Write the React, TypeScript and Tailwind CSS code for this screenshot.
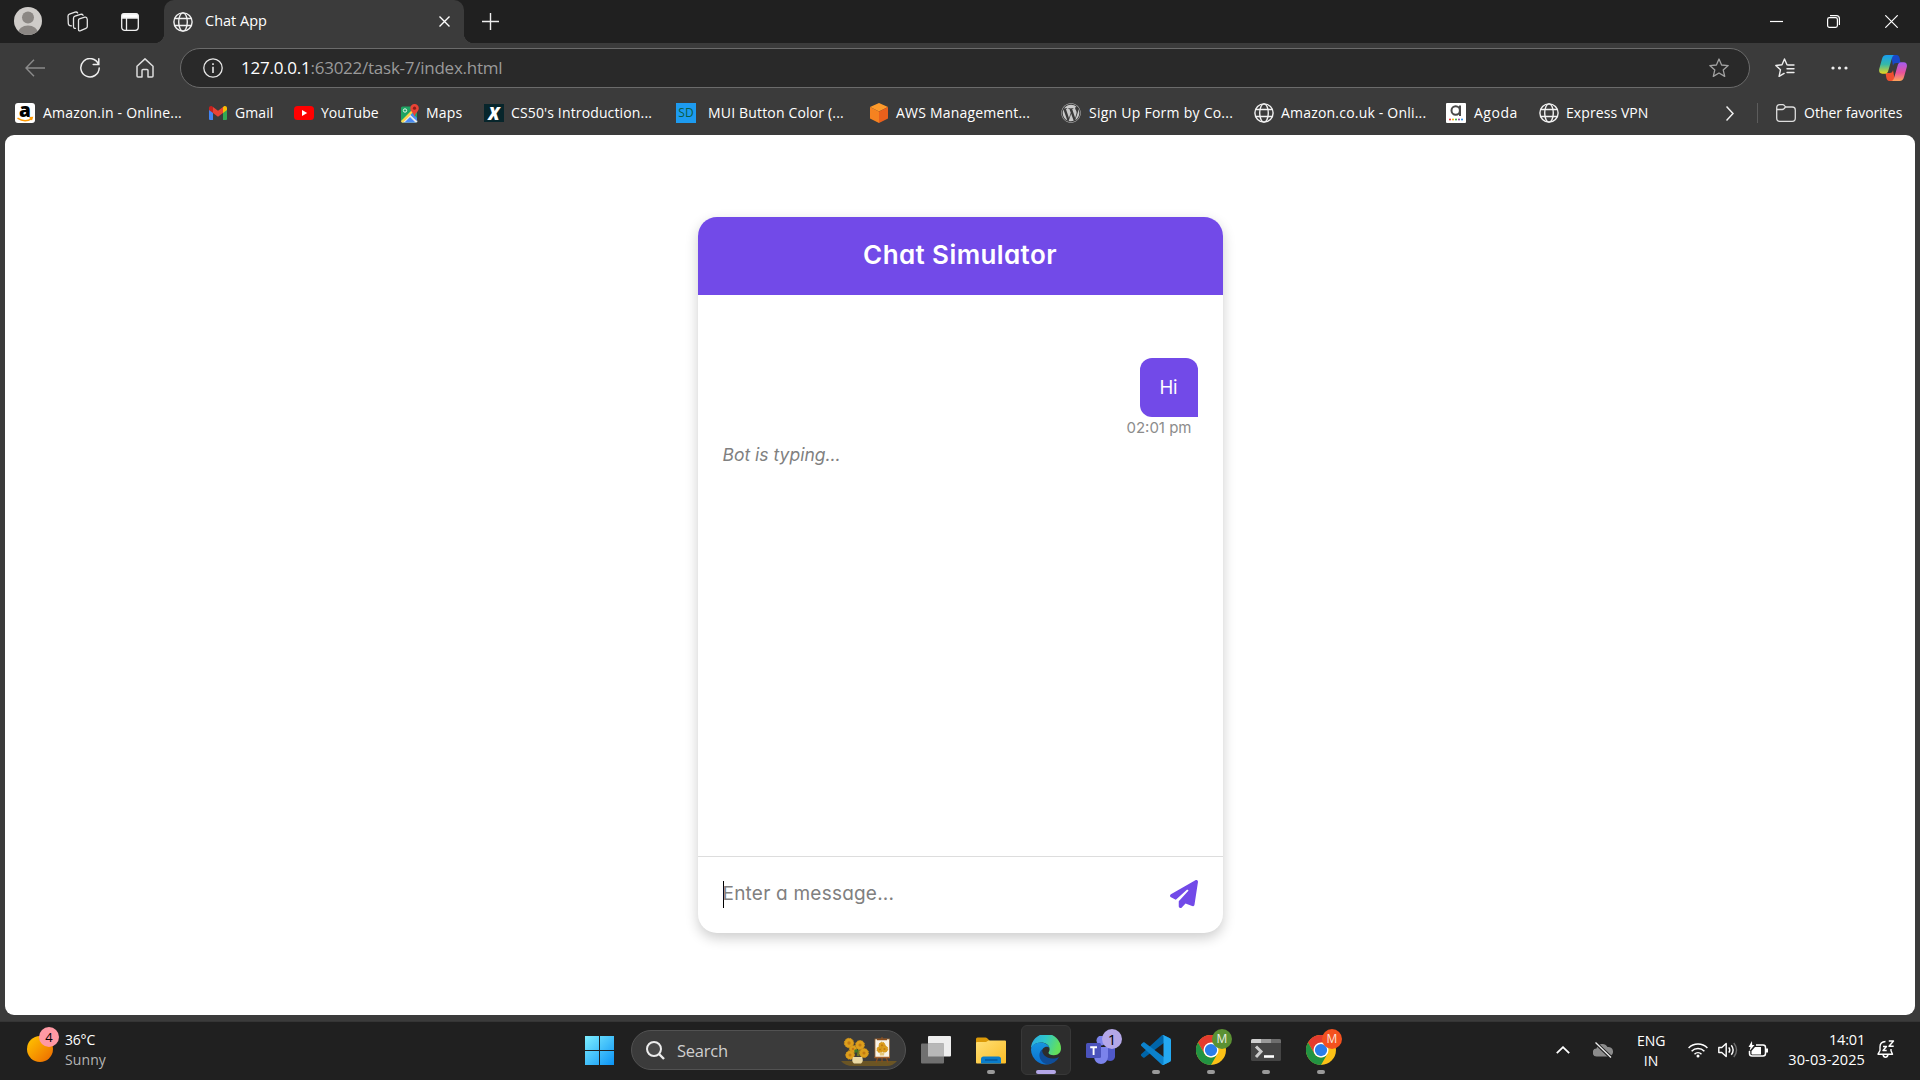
import { useState } from 'react';
import type { ReactNode } from 'react';
import { FaWordpress } from 'react-icons/fa6';

const Globe = ({ className = '' }: { className?: string }) => (
  <svg viewBox="0 0 20 20" className={`size-5 shrink-0 ${className}`} fill="none" stroke="#f1f1f1" strokeWidth="1.4">
    <circle cx="10" cy="10" r="9.1" />
    <ellipse cx="10" cy="10" rx="4.3" ry="9.1" />
    <path d="M1.8 6.5h16.4M1.8 13.5h16.4" />
  </svg>
);

const Chrome = () => (
  <svg viewBox="0 0 48 48" className="size-[30px]">
    <circle cx="24" cy="24" r="24" fill="#fbc116" />
    <path d="M24 12h20.8A24 24 0 0 0 3.2 12l10.4 18Z" fill="#e33b2e" />
    <path d="M3.2 12A24 24 0 0 0 24 48l10.4-18A12 12 0 0 1 13.6 30Z" fill="#229342" />
    <circle cx="24" cy="24" r="12" fill="#fff" />
    <circle cx="24" cy="24" r="9.8" fill="#2b7de9" />
  </svg>
);

const PaperPlane = () => (
  <svg viewBox="0 0 512 512" className="mb-px size-7" fill="#724ae8">
    <path d="M498.1 5.6c10.1 7 15.4 19.1 13.5 31.2l-64 416c-1.5 9.7-7.4 18.2-16 23s-18.9 5.400-28 1.600L284 427.700l-68.500 74.100c-8.900 9.700-22.900 12.900-35.200 8.100S160 493.200 160 480V396.400c0-4 1.500-7.800 4.200-10.700L331.800 202.800c5.800-6.300 5.600-16-.4-22s-15.700-6.400-22-.7L106 360.800 17.700 316.600C7.100 311.300 .3 300.700 0 288.900s5.900-22.800 16.100-28.700l448-256c10.700-6.100 23.900-5.500 34 1.400z" />
  </svg>
);

const AmazonIcon = () => (
  <div className="relative size-5 shrink-0 rounded-[3px] bg-white text-center font-['Open_Sans'] text-[19px] leading-[14px] font-extrabold text-black">
    a
    <svg viewBox="0 0 20 20" className="absolute inset-0 size-5" fill="none" stroke="#ff9900" strokeWidth="1.4">
      <path d="M2.5 15.2c4.500 3 10 3 14 .6M14.500 14.800l2.800-.2-.8 2.500" />
    </svg>
  </div>
);

const GmailIcon = () => (
  <svg viewBox="0 0 18 14" className="h-[14px] w-[18px] shrink-0">
    <path d="M0 2v11q0 1 1 1h3V5.500z" fill="#4285f4" />
    <path d="M18 2v11q0 1-1 1h-3V5.500z" fill="#34a853" />
    <path d="M4 1v6l5 3.800L14 7V1L9 4.800z" fill="#ea4335" />
    <path d="M0 2.200V4l4 3V1L3.300.5C1.800-.6 0 .4 0 2.200z" fill="#c5221f" />
    <path d="M18 2.200V4l-4 3V1l.7-.5C16.200-.6 18 .4 18 2.200z" fill="#fbbc04" />
  </svg>
);

const YouTubeIcon = () => (
  <svg viewBox="0 0 20 14" className="h-[14px] w-5 shrink-0">
    <rect width="20" height="14" rx="3.500" fill="#f00" />
    <path d="M8 4v6l5.200-3z" fill="#fff" />
  </svg>
);

const MapsIcon = () => (
  <svg viewBox="0 0 18 19" className="h-[19px] w-[18px] shrink-0">
    <rect x="0" y="2.500" width="16" height="16" rx="1.500" fill="#1fa463" />
    <path d="M1 18.500 9 10l7.500 7q0 1.500-1.500 1.500z" fill="#e8eaed" />
    <path d="M0 17 11 6l1.800 1.800L2 18.500q-2 0-2-1.500z" fill="#fbd34b" />
    <path d="M3.500 18.500 9 13l5.500 5.500z" fill="#4a8af4" />
    <path d="m9.500 11 2-2 4.500 5v3z" fill="#4a8af4" />
    <circle cx="4" cy="6.500" r="1.700" fill="none" stroke="#e7f5ec" />
    <path d="M13.500 0A4.200 4.200 0 0 0 9.300 4.200c0 3 3.500 4.500 4.200 8.800.7-4.300 4.300-5.800 4.300-8.800A4.200 4.200 0 0 0 13.500 0z" fill="#ea4335" />
    <circle cx="13.500" cy="4.200" r="1.600" fill="#8c1d18" />
  </svg>
);

const XIcon = () => (
  <div className="flex h-[18px] w-5 shrink-0 items-center justify-center bg-[#07252b] font-['Open_Sans'] text-[17px] leading-none font-extrabold text-white italic">X</div>
);

const SdIcon = () => (
  <div className="flex size-5 shrink-0 items-center justify-center bg-[#1d9bf0] font-['Open_Sans'] text-[12px] leading-none font-medium text-[#0a5c46]">SD</div>
);

const AwsIcon = () => (
  <svg viewBox="0 0 18 20" className="h-5 w-[18px] shrink-0">
    <path d="M9 0l9 4-9 4.500L0 4z" fill="#fd9a2b" />
    <path d="M0 4l9 4.500V20l-9-4.500z" fill="#f58220" />
    <path d="M18 4 9 8.500V20l9-4.500z" fill="#e9601c" />
  </svg>
);

const AgodaIcon = () => (
  <svg viewBox="0 0 20 20" className="size-5 shrink-0">
    <rect width="20" height="20" rx="1" fill="#fff" />
    <circle cx="9.700" cy="7.500" r="4.200" fill="none" stroke="#4a4a4a" strokeWidth="2" />
    <path d="M14 2.500v10.500" stroke="#4a4a4a" strokeWidth="2" />
    <circle cx="4" cy="16.500" r="1" fill="#e8262a" />
    <circle cx="7" cy="16.500" r="1" fill="#f7a600" />
    <circle cx="10" cy="16.500" r="1" fill="#3aaa35" />
    <circle cx="13" cy="16.500" r="1" fill="#8a3f98" />
    <circle cx="16" cy="16.500" r="1" fill="#1e88e5" />
  </svg>
);

const Copilot = () => (
  <svg viewBox="0 0 28 26" className="h-[26px] w-7">
    <defs>
      <linearGradient id="cpA" x1="0" y1="0" x2="0" y2="1">
        <stop offset="0" stopColor="#189df0" />
        <stop offset=".5" stopColor="#35b8a8" />
        <stop offset="1" stopColor="#e8d51d" />
      </linearGradient>
      <linearGradient id="cpB" x1="0" y1="0" x2="0" y2="1">
        <stop offset="0" stopColor="#a35cf0" />
        <stop offset=".55" stopColor="#e8529b" />
        <stop offset="1" stopColor="#fda45a" />
      </linearGradient>
    </defs>
    <path d="M12 0h5.500c2 0 2.700 1.500 3.200 3.500L21.500 8h-4c-2.500 0-3 1-3.500 3z" fill="#1848c9" />
    <path d="M16 26h-5.500c-2 0-2.700-1.500-3.200-3.500L6.500 18h4c2.500 0 3-1 3.500-3z" fill="#ef4f2f" />
    <path d="M7.500 0H16c-2 0-2.800 2-3.500 4.500L9.500 15c-.7 2.500-1.500 3.700-3.500 3.700H3.200C.5 18.700-.3 16.500.2 14L3 4C3.700 1.500 5 0 7.500 0z" fill="url(#cpA)" />
    <path d="M20.500 26H12c2 0 2.800-2 3.500-4.500L18.500 11c.7-2.500 1.500-3.700 3.500-3.700h2.800c2.700 0 3.500 2.200 3 4.700L25 22c-.7 2.500-2 4-4.500 4z" fill="url(#cpB)" />
  </svg>
);

const bookmarks: { icon: ReactNode; label: string; slot: string; text: string }[] = [
  { icon: <AmazonIcon />, label: 'Amazon.in - Online...', slot: 'w-[194px] gap-2', text: 'tracking-[0.2px]' },
  { icon: <GmailIcon />, label: 'Gmail', slot: 'w-[85px] gap-2', text: 'tracking-[0.1px]' },
  { icon: <YouTubeIcon />, label: 'YouTube', slot: 'w-[107px] gap-[7px]', text: '' },
  { icon: <MapsIcon />, label: 'Maps', slot: 'w-[83px] gap-[7px]', text: 'tracking-[0.2px]' },
  { icon: <XIcon />, label: "CS50's Introduction...", slot: 'w-[192px] gap-[7px]', text: 'tracking-[0.14px]' },
  { icon: <SdIcon />, label: 'MUI Button Color (...', slot: 'w-[194px] gap-3', text: 'tracking-[0.17px]' },
  { icon: <AwsIcon />, label: 'AWS Management...', slot: 'w-[191px] gap-2', text: 'tracking-[0.2px]' },
  { icon: <FaWordpress className="size-5 shrink-0 text-[#c9c9c9]" />, label: 'Sign Up Form by Co...', slot: 'w-[193px] gap-2', text: 'tracking-[0.25px]' },
  { icon: <Globe />, label: 'Amazon.co.uk - Onli...', slot: 'w-[192px] gap-[7px]', text: 'tracking-[0.2px]' },
  { icon: <AgodaIcon />, label: 'Agoda', slot: 'w-[93px] gap-2', text: 'tracking-[0.5px]' },
  { icon: <Globe />, label: 'Express VPN', slot: 'w-[187px] gap-[7px]', text: 'tracking-[0.08px]' },
];

function TabStrip() {
  return (
    <div className="flex h-[43px] items-center bg-[#202020]">
      <svg viewBox="0 0 28 28" className="-mt-px ml-[14px] size-7">
        <defs><clipPath id="av"><circle cx="14" cy="14" r="14" /></clipPath></defs>
        <g clipPath="url(#av)">
          <rect width="28" height="28" fill="#cfccc9" />
          <circle cx="14" cy="10.500" r="6" fill="#8b8784" />
          <ellipse cx="14" cy="26" rx="10" ry="7.500" fill="#8b8784" />
        </g>
      </svg>
      <svg viewBox="0 0 21 21" className="ml-[25px] size-[21px]" fill="none" stroke="#e6e6e6" strokeWidth="1.300" strokeLinejoin="round" strokeLinecap="round">
        <path d="m12.300 7.800 5.500-1.600q1.800-.4 2.200 1.200.3.900.3 1.600v6.500q0 1.400-1.400 1.900l-5.300 2.300q-2.100.8-2.100-1.300V9.300q0-1.200.8-1.500z" />
        <path d="M8.500 17.300q-2 .2-2-1.700V7.200q0-1.500 1.500-2l5.500-1.800q1.800-.5 2.600.9" />
        <path d="M4.500 14.800q-3 .2-3.200-2.300L1 5.200q0-1.500 1.400-2L8 1.200q1.800-.6 2.600.7" />
      </svg>
      <svg viewBox="0 0 18 18" className="ml-[33px] size-[18px]" fill="none" stroke="#f0f0f0" strokeWidth="1.300">
        <rect x=".7" y=".7" width="16.600" height="16.600" rx="3" />
        <path d="M1 1.500Q1 1 3 1h12q2 0 2 1.500V5H1z" fill="#fff" />
        <path d="M5.500 5v12" />
      </svg>
      <div className="relative ml-[25px] flex h-[43px] w-[300px] items-center rounded-t-[10px] bg-[#3b3b3b] before:absolute before:bottom-0 before:-left-[10px] before:size-[10px] before:bg-[radial-gradient(circle_at_0_0,#202020_10px,#3b3b3b_10.500px)] after:absolute after:-right-[10px] after:bottom-0 after:size-[10px] after:bg-[radial-gradient(circle_at_100%_0,#202020_10px,#3b3b3b_10.500px)]">
        <Globe className="ml-[9px]" />
        <span className="ml-3 pb-px text-[14.500px] leading-5">Chat App</span>
        <svg viewBox="0 0 11 11" className="mr-[14px] ml-auto size-[11px]" stroke="#fff" strokeWidth="1.400"><path d="M.5.5l10 10M10.500.5l-10 10" /></svg>
      </div>
      <svg viewBox="0 0 17 17" className="-mt-px ml-[18px] size-[17px]" stroke="#eee" strokeWidth="1.400"><path d="M8.500 0v17M0 8.500h17" /></svg>
      <svg viewBox="0 0 13 13" className="ml-auto size-[13px]" stroke="#fff" strokeWidth="1.200"><path d="M0 6.500h13" /></svg>
      <svg viewBox="0 0 13 13" className="ml-11 size-[13px]" fill="none" stroke="#fff" strokeWidth="1.200">
        <rect x=".6" y="2.600" width="9.800" height="9.800" rx="1.800" />
        <path d="M3 .6h6.400q3 0 3 3V10" />
      </svg>
      <svg viewBox="0 0 13 13" className="mr-[22px] ml-[45px] size-[13px]" stroke="#fff" strokeWidth="1.200"><path d="M.3.3l12.400 12.400M12.700.3.3 12.700" /></svg>
    </div>
  );
}

function AddressRow() {
  return (
    <div className="flex h-[50px] items-center">
      <svg viewBox="0 0 20 18" className="-mt-px ml-[25px] h-[18px] w-5" fill="none" stroke="#8b8b8b" strokeWidth="1.400"><path d="M20 9H1M9 .8 1 9l8 8.200" /></svg>
      <svg viewBox="0 0 20 20" className="ml-[35px] size-5" fill="none" stroke="#eee" strokeWidth="1.500" strokeLinecap="round"><path d="M18.500 6.200A9.200 9.200 0 1 0 19.200 10M18.800.8v5.700h-5.600" /></svg>
      <svg viewBox="0 0 18 20" className="ml-9 h-5 w-[18px]" fill="none" stroke="#ddd" strokeWidth="1.500" strokeLinejoin="round"><path d="M9 .9 1 8.200V18q0 1 1 1h4v-6.500q0-1 1-1h4q1 0 1 1V19h4q1 0 1-1V8.200z" /></svg>
      <div className="ml-[26px] flex h-10 w-[1570px] items-center rounded-full border border-[#6b6b6b] bg-[#292929]">
        <svg viewBox="0 0 20 20" className="ml-[22px] size-5" fill="none" stroke="#e6e6e6" strokeWidth="1.300"><circle cx="10" cy="10" r="9.200" /><path d="M10 8.800V15M10 5.200v1.800" strokeWidth="1.600" /></svg>
        <span className="ml-[18px] text-[17px] leading-6 tracking-[-0.25px] text-[#9a9a9a]"><span className="text-white">127.0.0.1</span>:63022/task-7/index.html</span>
        <svg viewBox="0 0 20 20" className="mr-5 ml-auto size-5" fill="none" stroke="#a2a2a2" strokeWidth="1.300" strokeLinejoin="round"><path d="m10 1 2.600 6 6.600.6-5 4.300 1.500 6.500L10 15l-5.700 3.400 1.500-6.500-5-4.300L7.400 7z" /></svg>
      </div>
      <svg viewBox="0 0 20 20" className="ml-[25px] size-5" fill="none" stroke="#eee" strokeWidth="1.400" strokeLinejoin="round" strokeLinecap="round"><path d="M13.500 7 12 6.800 9.500 1 7 6.800.8 7.500l4.700 4.200-1.400 6.700 5-3M13.500 7H19M12 10.800h7M12 14.500h7" /></svg>
      <svg viewBox="0 0 17 4" className="ml-9 h-1 w-[17px]" fill="#eee"><circle cx="2" cy="2" r="1.600" /><circle cx="8.500" cy="2" r="1.600" /><circle cx="15" cy="2" r="1.600" /></svg>
      <div className="ml-[31px]"><Copilot /></div>
    </div>
  );
}

function BookmarkBar() {
  return (
    <div className="flex h-[42px] items-center pb-0.5 pl-[15px] text-[14px] leading-5 whitespace-nowrap text-white">
      {bookmarks.map((b) => (
        <div key={b.label} className={`flex shrink-0 items-center ${b.slot}`}>
          {b.icon}
          <span className={b.text}>{b.label}</span>
        </div>
      ))}
      <svg viewBox="0 0 8 15" className="h-[15px] w-2" fill="none" stroke="#eee" strokeWidth="1.500"><path d="m.5.5 6.500 7-6.500 7" /></svg>
      <div className="ml-[23px] h-5 w-px bg-[#5c5c5c]" />
      <svg viewBox="0 0 20 18" className="ml-[18px] h-[18px] w-5" fill="none" stroke="#ddd" strokeWidth="1.300"><path d="M.7 4q0-3.300 3-3.300h3q1 0 2 1.200l1 1.100h6.600q3 0 3 3V14q0 3.300-3 3.300H3.700q-3 0-3-3.300zM.7 5.500h5.500q1 0 2-1L9.500 3" /></svg>
      <span className="ml-2">Other favorites</span>
    </div>
  );
}

function ChatCard() {
  const [message, setMessage] = useState('');
  return (
    <div className="flex h-[716px] w-[525px] flex-col overflow-hidden rounded-[19px] bg-white font-['Inter',sans-serif] shadow-[0_5px_13px_rgba(0,0,0,0.2)] [font-feature-settings:'cv11']">
      <div className="flex h-[78px] shrink-0 justify-center bg-[#724ae8] pt-[19px] text-[26px] leading-[38px] font-semibold tracking-[0.4px] text-white">Chat Simulator</div>
      <div className="flex flex-1 flex-col px-[25px] pt-[63px]">
        <div className="flex h-[59px] w-[58px] items-center justify-center self-end rounded-[12px] rounded-br-none bg-[#724ae8] text-[18.500px] text-white">Hi</div>
        <div className="mr-[6px] self-end pt-px text-[15px] leading-5 text-[#8c8c8c]">02:01 pm</div>
        <div className="pt-[5px] text-[17.500px] leading-6 text-[#808080] italic">Bot is typing...</div>
      </div>
      <div className="flex h-[77px] shrink-0 items-center border-t border-[#dddddd] px-[25px] pb-px">
        <div className="h-[27px] w-px bg-black" />
        <input
          value={message}
          onChange={(e) => setMessage(e.target.value)}
          placeholder="Enter a message..."
          className="-ml-px flex-1 bg-transparent text-[19px] tracking-[0.22px] outline-none placeholder:text-[#808080]"
        />
        <PaperPlane />
      </div>
    </div>
  );
}

const Slot = ({ children, dot = true }: { children: ReactNode; dot?: boolean }) => (
  <div className="relative flex h-[50px] w-[50px] items-center justify-center">
    {children}
    {dot && <span className="absolute bottom-px left-[21px] h-1 w-2 rounded-full bg-[#9a9a9a]" />}
  </div>
);

const Badge = ({ children, className }: { children: ReactNode; className: string }) => (
  <span className={`absolute top-1 left-[26px] flex size-5 items-center justify-center rounded-full leading-none ${className}`}>{children}</span>
);

const Sunflower = ({ x, y, r }: { x: number; y: number; r: number }) => (
  <g>
    <circle cx={x} cy={y} r={r} fill="#dd9f1c" stroke="#d0931a" strokeWidth="1" strokeDasharray="1.500 1" />
    <circle cx={x} cy={y} r={r * 0.35} fill="#c27a14" />
  </g>
);

function Taskbar() {
  return (
    <div className="flex h-[59px] items-center border-t border-[#353535] bg-[#202020] pb-0.5">
      <div className="relative -mt-0.5 ml-[27px] size-[26px] rounded-full bg-linear-to-br from-[#ffc800] to-[#ea6500]">
        <span className="absolute -top-[9px] left-3 flex size-5 items-center justify-center rounded-full bg-[#ff99a4] text-[13px] leading-none text-black">4</span>
      </div>
      <div className="ml-3 w-[508px] text-[14px] leading-5">
        <div className="tracking-[-0.2px]">36°C</div>
        <div className="tracking-[0.1px] text-[#b5b5b5]">Sunny</div>
      </div>
      <svg viewBox="0 0 29 29" className="ml-3 size-[29px]">
        <defs><linearGradient id="win" x1="0" y1="0" x2="1" y2="1"><stop offset="0" stopColor="#7deeff" /><stop offset="1" stopColor="#0b93f5" /></linearGradient></defs>
        <path d="M0 0h14v14H0zM15 0h14v14H15zM0 15h14v14H0zM15 15h14v14H15z" fill="url(#win)" />
      </svg>
      <div className="ml-[17px] flex h-10 w-[275px] items-center rounded-full border border-[#525252] bg-[#3b3b3b]">
        <svg viewBox="0 0 19 19" className="ml-[14px] size-[19px]" fill="none" stroke="#ececec" strokeWidth="2"><circle cx="8" cy="8" r="7" fill="#4a4a4a" /><path d="m13 13 5 5" strokeWidth="2.400" /></svg>
        <span className="ml-3 pt-0.5 text-[16.500px] leading-6 tracking-[-0.25px] text-[#cfcfcf]">Search</span>
        <svg viewBox="0 0 56 30" className="mt-1 mr-2 ml-auto h-[30px] w-14">
          <path d="M0 24h56q-4 5-10 5H12Q4 29 0 24z" fill="#6b5524" />
          <path d="M13 18 8 8M17 19l2-11M20 19l4-3M12 20l-3-1" stroke="#6f7a22" strokeWidth="2.500" />
          <Sunflower x={8} y={6} r={4.700} />
          <Sunflower x={19} y={8} r={4.500} />
          <Sunflower x={12} y={12} r={3.600} />
          <Sunflower x={23} y={16} r={4.500} />
          <Sunflower x={9} y={18} r={4.300} />
          <circle cx="15" cy="14" r="1.800" fill="#3d7a2a" />
          <path d="M12 20h9q2 4-1 6.500h-7Q10 24 12 20z" fill="#ead9a4" />
          <path d="M37 20l-2 5.500M45 20l2 5.500M41 0v25" stroke="#8a4d1d" strokeWidth="1.300" />
          <rect x="34" y="2" width="14.500" height="18.500" fill="#f8f3e6" stroke="#9b6a3c" strokeWidth=".8" />
          <path d="M36 2.500h10" stroke="#8a4d1d" strokeWidth="1.500" />
          <Sunflower x={41} y={8.2} r={3} />
          <Sunflower x={39} y={12.5} r={3} />
          <Sunflower x={43.5} y={12} r={3.2} />
          <path d="M38.500 15.500h5l-.5 3h-4z" fill="#e5c77a" />
          <path d="M33.500 20.500H49" stroke="#a4602a" strokeWidth="1.500" />
        </svg>
      </div>
      <div className="ml-[5px] flex gap-[5px]">
        <Slot dot={false}>
          <svg viewBox="0 0 30 28" className="h-7 w-[30px]">
            <rect x="7" width="23" height="20.500" rx="1" fill="#eeeeee" />
            <rect y="7.500" width="23" height="20" rx="1" fill="#707070" />
            <path d="M7 7.500h16v13H7z" fill="#b8b8b8" />
          </svg>
        </Slot>
        <Slot>
          <svg viewBox="0 0 30 27" className="h-[27px] w-[30px]">
            <defs><linearGradient id="fold" x1="0" y1="0" x2="1" y2="1"><stop offset="0" stopColor="#ffdf75" /><stop offset="1" stopColor="#fbbd26" /></linearGradient></defs>
            <path d="M0 8V2Q0 .5 1.500.5h8q1 0 1.700.8L14 4v4z" fill="#dc9a08" />
            <path d="M0 6q0-1 1-1h9l2.500-1.500H29q1 0 1 1V25.500q0 1-1 1H1q-1 0-1-1z" fill="url(#fold)" />
            <path d="M5 26.500V22q0-2.500 2.500-2.500h15Q25 19.500 25 22v4.500z" fill="#0a7dcb" />
            <path d="M9 23h12.500" stroke="#064f8f" strokeWidth="1.200" />
          </svg>
        </Slot>
        <div className="relative flex size-[50px] items-center justify-center rounded-md border border-[#383838] bg-[#2d2d2d]">
          <svg viewBox="0 0 30 30" className="size-[30px]">
            <defs>
              <linearGradient id="eA" x1="0" y1="0" x2="1" y2=".3"><stop offset="0" stopColor="#2aa6e6" /><stop offset=".5" stopColor="#2fc7cb" /><stop offset="1" stopColor="#63e05b" /></linearGradient>
              <linearGradient id="eB" x1="0" y1="0" x2="0" y2="1"><stop offset="0" stopColor="#1796df" /><stop offset="1" stopColor="#0a6fd0" /></linearGradient>
            </defs>
            <path d="M0 14A15 15 0 0 1 30 13.500c0 4-3 6.700-7.200 6.700-3.300 0-5.300-1.200-5.300-2.400 0-.8 1.100-1.300 1.100-3.500C18.600 10 14.500 7.600 10 7.600 5 7.600 1 10.500 0 14z" fill="url(#eA)" />
            <path d="M0 14.500C.8 9.500 5 7.500 9.500 7.500c4.700 0 8.300 2.500 9 5.500-1.500-1.700-4.500-1.700-6.500.5-3 3.500-1.500 10 3.500 13 2 1.300 3.500 1.800 5.500 1.700A15 15 0 0 1 0 14.500z" fill="url(#eB)" />
            <path d="M11.500 14c-4 3-4.500 9 .5 13.500 5.500 3.800 13 .5 16-5.500-5 2.500-11 2-14.500-1.500-2-2-2.700-4.500-2-6.500z" fill="#0f4d98" />
          </svg>
          <span className="absolute bottom-0 left-[14px] h-1 w-5 rounded-full bg-[#b4a7e8]" />
        </div>
        <Slot dot={false}>
          <svg viewBox="0 0 30 28" className="h-7 w-[30px]">
            <circle cx="24.500" cy="6" r="3.500" fill="#5059c9" />
            <circle cx="15.500" cy="4.500" r="5" fill="#7b83eb" />
            <path d="M20 11h9v10q-1 4-5 4-3 0-4-2z" fill="#5059c9" />
            <path d="M8 11h14v10q-1 7-7 7t-7-7z" fill="#7b83eb" />
            <rect y="7" width="15" height="15" rx="1.500" fill="#4b53bc" />
            <path d="M4.200 11.200h6.800M7.600 11.200V19" stroke="#fff" strokeWidth="1.900" />
          </svg>
          <Badge className="bg-[#b4a7e8] text-[15px] text-black">1</Badge>
        </Slot>
        <Slot>
          <svg viewBox="0 0 100 100" className="size-[30px]">
            <path d="M96.500 10.700 75.900.8c-2.400-1.100-5.200-.7-7.100 1.200L1.300 63.500c-1.800 1.700-1.800 4.500 0 6.100l5.500 5c1.500 1.400 3.700 1.500 5.300.2l81.300-61.600c2.700-2.100 6.600-.1 6.600 3.300v-.2c0-2.400-1.400-4.600-3.500-5.600z" fill="#0065a9" />
            <path d="M96.500 89.300l-20.600 9.900c-2.400 1.100-5.200.7-7.100-1.200L1.300 36.500c-1.800-1.700-1.800-4.500 0-6.100l5.500-5c1.500-1.400 3.700-1.500 5.300-.2l81.300 61.600c2.700 2.100 6.600.1 6.600-3.300v.2c0 2.400-1.400 4.600-3.500 5.600z" fill="#0c82cc" />
            <path d="M75.900 99.100c-2.400 1.100-5.200.7-7.100-1.200 2.300 2.300 6.200.7 6.200-2.600V4.700c0-3.300-3.900-4.900-6.200-2.600C70.700.2 73.500-.3 75.900.9l20.600 9.900c2.200 1 3.500 3.200 3.500 5.600v67.200c0 2.400-1.400 4.600-3.500 5.600z" fill="#24a9f2" />
          </svg>
        </Slot>
        <Slot><Chrome /><Badge className="bg-[#5b9133] text-[12px] font-medium text-[#e9efe4]">M</Badge></Slot>
        <Slot>
          <svg viewBox="0 0 30 22" className="h-[22px] w-[30px]">
            <rect width="30" height="22" rx="1.500" fill="#454545" />
            <path d="M0 4V1.500Q0 0 1.500 0H10v4z" fill="#cfcfcf" /><path d="M10 0h10v4H10z" fill="#999" /><path d="M20 0h8.500Q30 0 30 1.500V4H20z" fill="#6e6e6e" />
            <path d="m5 7.500 5 5-5 5.500" fill="none" stroke="#cccccc" strokeWidth="3" /><path d="M13 17.500h10" stroke="#fff" strokeWidth="2.600" />
          </svg>
        </Slot>
        <Slot><Chrome /><Badge className="bg-[#f4511e] text-[12px] font-medium text-[#fbe3da]">M</Badge></Slot>
      </div>
      <svg viewBox="0 0 14 8" className="ml-auto h-2 w-[14px]" fill="none" stroke="#fff" strokeWidth="1.800"><path d="m.8 7.200 6.200-6 6.200 6" /></svg>
      <svg viewBox="0 0 20 16" className="ml-[23px] h-4 w-5"><path d="M4 14.500a4 4 0 0 1-.5-8A6 6 0 0 1 14.500 5 4.800 4.800 0 0 1 16 14.500z" fill="#8b8b8b" /><path d="M2.500.8 18 15.500" stroke="#202020" strokeWidth="3.500" /><path d="M2.500.5 18 15.500" stroke="#eee" strokeWidth="1.300" /></svg>
      <div className="ml-6 w-[28px] pt-0.5 text-center text-[14px] leading-5"><div>ENG</div><div>IN</div></div>
      <svg viewBox="0 0 20 16" className="ml-[23px] h-4 w-5" fill="none" stroke="#fff" strokeWidth="1.500"><path d="M.6 6a13.300 13.300 0 0 1 18.800 0M3.600 9.200a9 9 0 0 1 12.800 0M6.500 12.200a5 5 0 0 1 7 0" /><circle cx="10" cy="14" r="1.500" fill="#fff" stroke="none" /></svg>
      <svg viewBox="0 0 20 16" className="ml-[10px] h-4 w-5" fill="none" stroke="#fff" strokeWidth="1.400" strokeLinejoin="round"><path d="M.8 5.500h3l4.400-4v13l-4.400-4h-3zM10.800 5.300q2 2.700 0 5.400M13.300 3.200q3.700 4.800 0 9.600" /><path d="M15.800 1q5.500 7 0 14" stroke="#6c6c6c" /></svg>
      <svg viewBox="0 0 20 17" className="-mt-0.5 ml-[10px] h-[17px] w-5" fill="none" stroke="#fff" strokeWidth="1.500"><path d="M8 4h7q2.500 0 2.500 2.500v6Q17.500 15 15 15H4q-2.500 0-2.500-2.500V10" /><path d="M3.500 13V10L7 6h6v7.500H4z" fill="#fff" stroke="none" /><path d="M19 7.500v4" strokeWidth="2" /><path d="M4 0 .5 6h2L1.500 10 6.500 4h-2.300z" fill="#fff" stroke="none" /></svg>
      <div className="ml-5 w-[77px] text-right text-[14.500px] leading-5 whitespace-nowrap"><div className="tracking-[-0.2px]">14:01</div><div className="tracking-[0.1px]">30-03-2025</div></div>
      <svg viewBox="0 0 18 18" className="-mt-0.5 mr-[25px] ml-3 size-[18px]" fill="none" stroke="#fff" strokeWidth="1.400" strokeLinejoin="round"><path d="M8.500 1.500Q3 1.800 3 7v3.500L1 14.200h14.500L14 10.800V9M6 14.500q.5 2.700 2.500 2.700t2.500-2.700M6 6.500h3.500L6 10.500h3.700M11.800 1h4.700l-4.500 5.300h4.700" /></svg>
    </div>
  );
}

export default function App() {
  return (
    <div className="flex h-[1080px] w-[1920px] flex-col overflow-hidden bg-[#3b3b3b] font-['Open_Sans','Noto_Sans',sans-serif] text-white">
      <TabStrip />
      <AddressRow />
      <BookmarkBar />
      <main className="mx-[5px] flex h-[880px] items-start justify-center rounded-[9px] bg-white pt-[82px]">
        <ChatCard />
      </main>
      <div className="h-[6px]" />
      <Taskbar />
    </div>
  );
}
